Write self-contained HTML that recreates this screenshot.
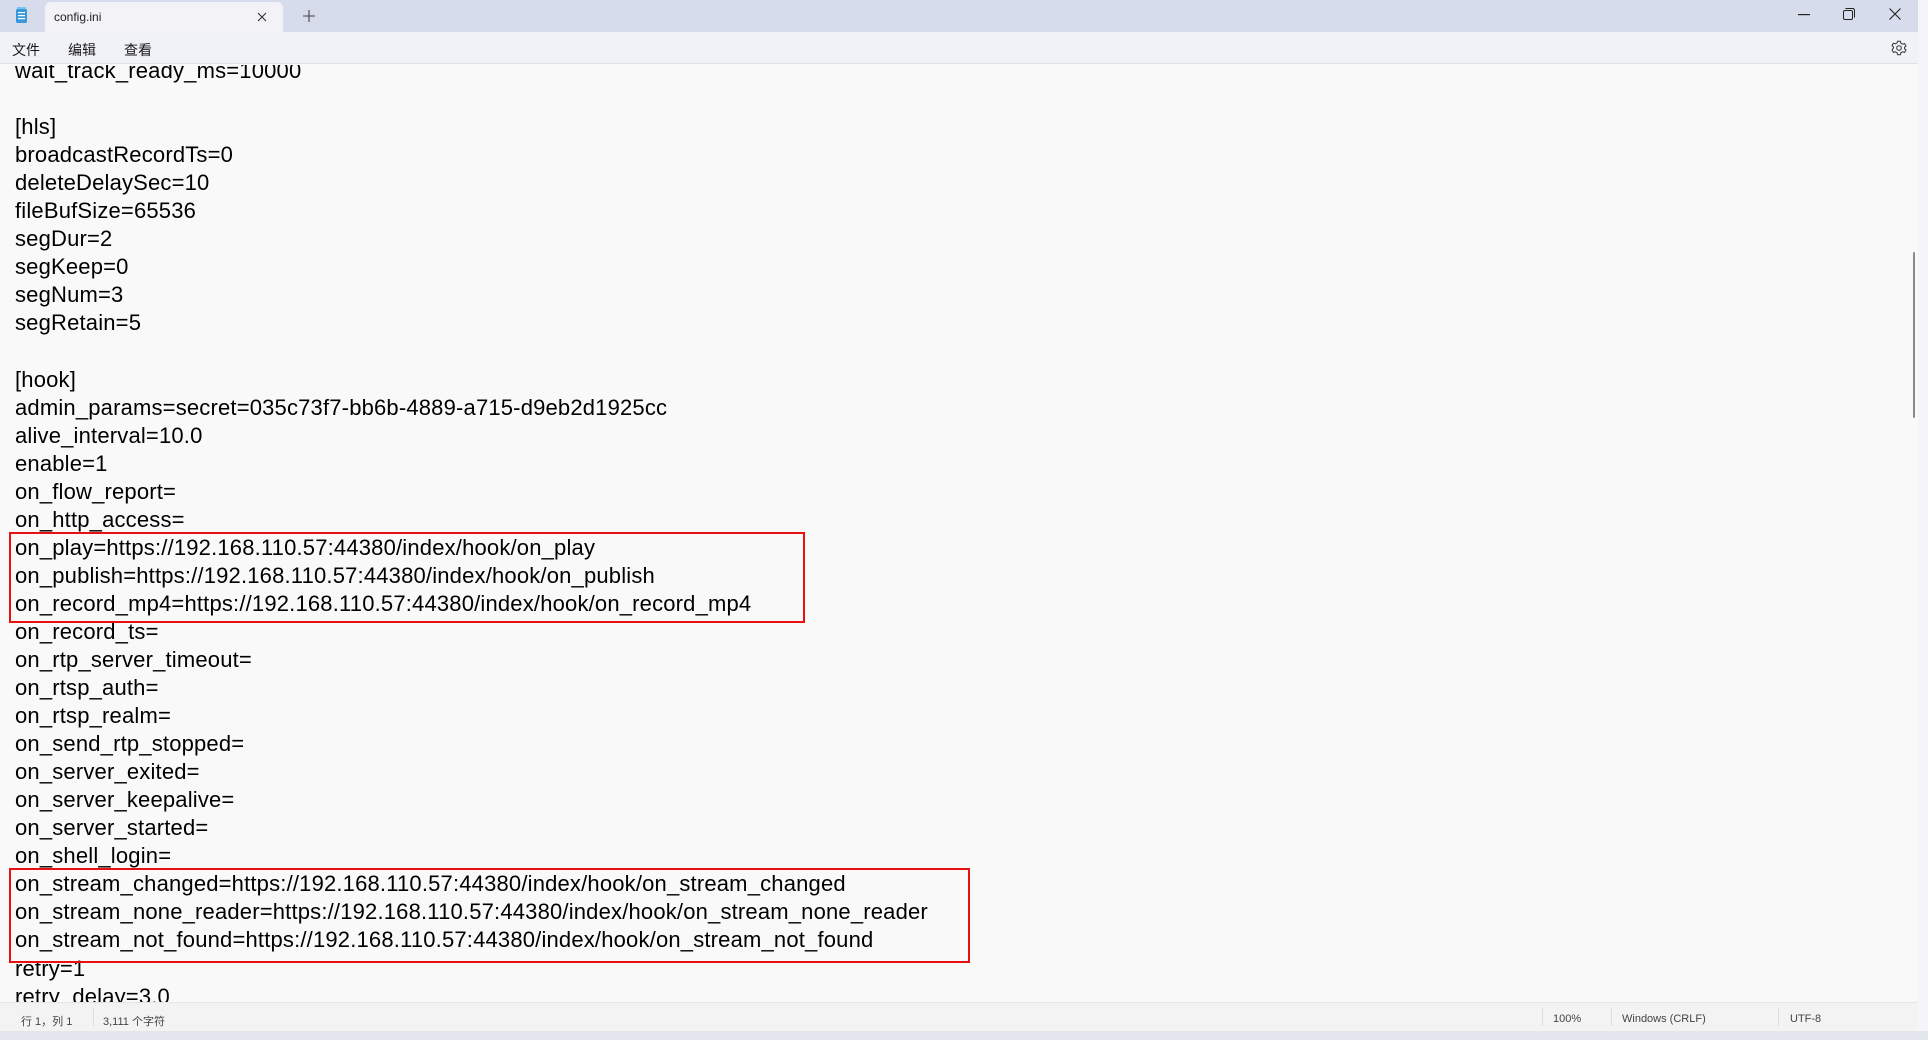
<!DOCTYPE html>
<html><head><meta charset="utf-8"><style>
*{margin:0;padding:0;box-sizing:border-box}
body{width:1928px;height:1040px;overflow:hidden;background:#e4e6ee;position:relative;font-family:"Liberation Sans","Noto Sans CJK SC",sans-serif}
.win{position:absolute;left:0;top:0;width:1918px;height:1031px;background:#f9f9f9}
.title{position:absolute;left:0;top:0;width:1918px;height:32px;background:#d6dcec}
.tab{position:absolute;left:45px;top:2px;width:238px;height:30px;background:#f3f3f7;border-radius:6px 6px 0 0;font-size:12px;color:#222}
.menu{position:absolute;left:0;top:32px;width:1918px;height:32px;background:#f1f2f7;border-bottom:1px solid #e0e2ea;font-size:14px;color:#1a1a1a}
.menu span{position:absolute;top:8px}
.text{position:absolute;left:15px;top:57px;font-size:22px;line-height:28.05px;color:#000;white-space:pre;letter-spacing:0.18px}
.clip{position:absolute;left:0;top:65px;width:1918px;height:937px;overflow:hidden}
.box{position:absolute;border:2px solid #e81010}
.status{position:absolute;left:0;top:1002px;width:1918px;height:29px;background:#f3f3f3;border-top:1px solid #e6e6e6;font-size:11px;color:#444}
.status span{position:absolute;top:10px}
.sep{position:absolute;top:5px;width:1px;height:18px;background:#ddd}
</style></head><body>
<div class="win">
<div class="title">
 <svg style="position:absolute;left:15px;top:7px" width="13" height="17" viewBox="0 0 13 17"><rect x="1" y="2" width="11" height="14" rx="1.5" fill="#3a9ad9"/><rect x="3" y="5" width="7" height="1.2" fill="#fff"/><rect x="3" y="8" width="7" height="1.2" fill="#fff"/><rect x="3" y="11" width="7" height="1.2" fill="#fff"/><rect x="2" y="0" width="9" height="2" fill="#7bc2ee"/></svg>
 <div class="tab"><span style="position:absolute;left:9px;top:8px">config.ini</span>
 <svg style="position:absolute;left:212px;top:10px" width="10" height="10" viewBox="0 0 10 10"><path d="M1 1L9 9M9 1L1 9" stroke="#333" stroke-width="1.1"/></svg></div>
 <svg style="position:absolute;left:303px;top:10px" width="12" height="12" viewBox="0 0 12 12"><path d="M6 0V12M0 6H12" stroke="#444" stroke-width="1.1"/></svg>
 <svg style="position:absolute;left:1798px;top:14px" width="12" height="2"><rect width="12" height="1.2" fill="#222"/></svg>
 <svg style="position:absolute;left:1843px;top:8px" width="12" height="12" viewBox="0 0 12 12"><rect x="0.5" y="2.5" width="9" height="9" rx="1.5" fill="none" stroke="#222"/><path d="M2.5 0.5H9.5Q11.5 0.5 11.5 2.5V9.5" fill="none" stroke="#222"/></svg>
 <svg style="position:absolute;left:1889px;top:8px" width="12" height="12" viewBox="0 0 12 12"><path d="M0.5 0.5L11.5 11.5M11.5 0.5L0.5 11.5" stroke="#222" stroke-width="1.1"/></svg>
</div>
<div class="menu"><span style="left:12px">文件</span><span style="left:68px">编辑</span><span style="left:124px">查看</span>
 <svg style="position:absolute;left:1891px;top:8px" width="16" height="16" viewBox="0 0 16 16"><circle cx="8" cy="8" r="2.3" fill="none" stroke="#333"/><path d="M6.6 1.2h2.8l.5 2 1.7 1 2-.6 1.4 2.4-1.5 1.4v1.2l1.5 1.4-1.4 2.4-2-.6-1.7 1-.5 2H6.6l-.5-2-1.7-1-2 .6L1 9.6l1.5-1.4V7L1 5.6 2.4 3.2l2 .6 1.7-1z" fill="none" stroke="#333" stroke-width="1"/></svg>
</div>
<div class="clip"><div class="text" style="top:-8px">wait_track_ready_ms=10000

[hls]
broadcastRecordTs=0
deleteDelaySec=10
fileBufSize=65536
segDur=2
segKeep=0
segNum=3
segRetain=5

[hook]
admin_params=secret=035c73f7-bb6b-4889-a715-d9eb2d1925cc
alive_interval=10.0
enable=1
on_flow_report=
on_http_access=
on_play=https://192.168.110.57:44380/index/hook/on_play
on_publish=https://192.168.110.57:44380/index/hook/on_publish
on_record_mp4=https://192.168.110.57:44380/index/hook/on_record_mp4
on_record_ts=
on_rtp_server_timeout=
on_rtsp_auth=
on_rtsp_realm=
on_send_rtp_stopped=
on_server_exited=
on_server_keepalive=
on_server_started=
on_shell_login=
on_stream_changed=https://192.168.110.57:44380/index/hook/on_stream_changed
on_stream_none_reader=https://192.168.110.57:44380/index/hook/on_stream_none_reader
on_stream_not_found=https://192.168.110.57:44380/index/hook/on_stream_not_found
retry=1
retry_delay=3.0</div></div>
<div class="box" style="left:9px;top:532px;width:796px;height:91px"></div>
<div class="box" style="left:9px;top:868px;width:961px;height:95px"></div>
<div style="position:absolute;left:1913px;top:252px;width:2px;height:166px;background:#8a8a8a;border-radius:1px"></div>
<div class="status">
 <span style="left:21px">行 1，列 1</span><div class="sep" style="left:93px"></div>
 <span style="left:103px">3,111 个字符</span>
 <div class="sep" style="left:1542px"></div><span style="left:1553px">100%</span>
 <div class="sep" style="left:1611px"></div><span style="left:1622px">Windows (CRLF)</span>
 <div class="sep" style="left:1778px"></div><span style="left:1790px">UTF-8</span>
</div>
</div>
<div style="position:absolute;left:1918px;top:0;width:10px;height:1031px;background:#f4f5f8"></div>
</body></html>
